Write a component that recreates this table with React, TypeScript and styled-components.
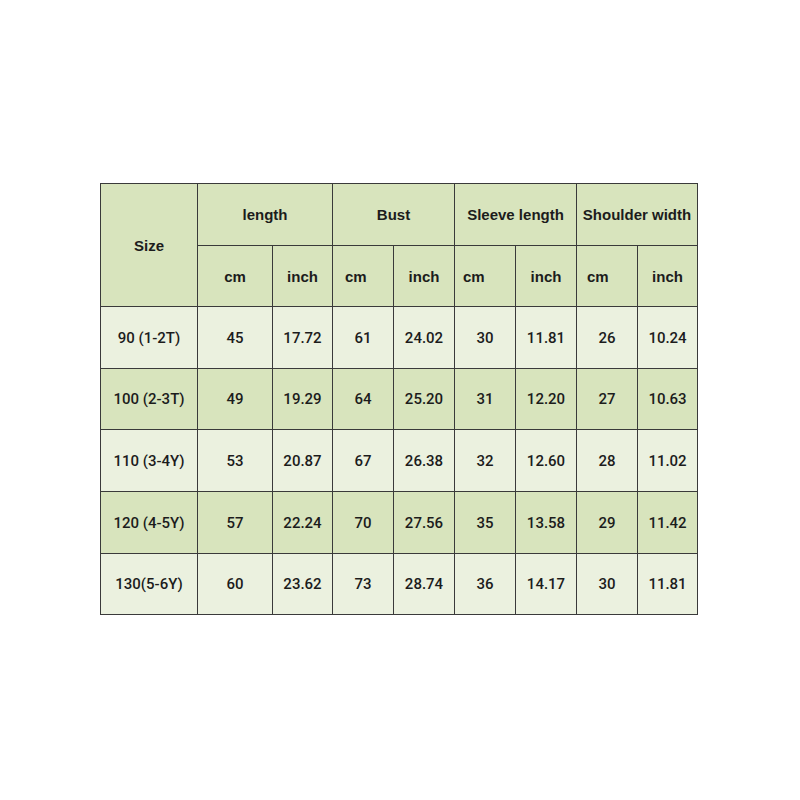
import React from "react";
import styled, { createGlobalStyle } from "styled-components";

const Global = createGlobalStyle`
  html, body { margin: 0; padding: 0; background: #ffffff; }
  body { font-family: "Liberation Sans", Arial, sans-serif; }
`;

const Page = styled.div`
  width: 800px;
  height: 800px;
  padding: 183px 0 0 100px;
  box-sizing: border-box;
`;

const Table = styled.table`
  border-collapse: collapse;
  table-layout: fixed;
  width: 598px;
  color: #1c1c1c;
`;

const HeadCell = styled.th<{ $align?: "left" | "center" | "right"; $pad?: number; $h: number }>`
  background: #d8e4bd;
  border: 1px solid #3a3a3a;
  height: ${(p) => p.$h}px;
  padding: 0 ${(p) => p.$pad ?? 0}px;
  font-size: 15px;
  font-weight: bold;
  text-align: ${(p) => p.$align ?? "center"};
  vertical-align: middle;
  white-space: nowrap;
`;

const DataCell = styled.td<{ $green: boolean; $h: number }>`
  background: ${(p) => (p.$green ? "#d8e4bd" : "#ebf1df")};
  border: 1px solid #3a3a3a;
  height: ${(p) => p.$h}px;
  padding: 0;
  font-family: Roboto, "Liberation Sans", sans-serif;
  font-size: 15px;
  font-weight: 500;
  color: #1c1c1c;
  text-align: center;
  vertical-align: middle;
  white-space: nowrap;
`;

const widths = [97, 75, 60, 61, 61, 61, 61, 61, 60];
const rowHeights = [61, 60, 61, 61, 60];

const rows: string[][] = [
  ["90 (1-2T)", "45", "17.72", "61", "24.02", "30", "11.81", "26", "10.24"],
  ["100 (2-3T)", "49", "19.29", "64", "25.20", "31", "12.20", "27", "10.63"],
  ["110 (3-4Y)", "53", "20.87", "67", "26.38", "32", "12.60", "28", "11.02"],
  ["120 (4-5Y)", "57", "22.24", "70", "27.56", "35", "13.58", "29", "11.42"],
  ["130(5-6Y)", "60", "23.62", "73", "28.74", "36", "14.17", "30", "11.81"],
];

export default function App() {
  return (
    <>
      <Global />
      <Page>
        <Table>
          <colgroup>
            {widths.map((w, i) => (
              <col key={i} style={{ width: w }} />
            ))}
          </colgroup>
          <thead>
            <tr>
              <HeadCell $h={61} rowSpan={2}>Size</HeadCell>
              <HeadCell $h={61} colSpan={2}>length</HeadCell>
              <HeadCell $h={61} colSpan={2}>Bust</HeadCell>
              <HeadCell $h={61} colSpan={2}>Sleeve length</HeadCell>
              <HeadCell $h={61} colSpan={2}>Shoulder width</HeadCell>
            </tr>
            <tr>
              <HeadCell $h={60}>cm</HeadCell>
              <HeadCell $h={60}>inch</HeadCell>
              <HeadCell $h={60} $align="left" $pad={12}>cm</HeadCell>
              <HeadCell $h={60}>inch</HeadCell>
              <HeadCell $h={60} $align="left" $pad={8}>cm</HeadCell>
              <HeadCell $h={60}>inch</HeadCell>
              <HeadCell $h={60} $align="left" $pad={10}>cm</HeadCell>
              <HeadCell $h={60}>inch</HeadCell>
            </tr>
          </thead>
          <tbody>
            {rows.map((r, i) => (
              <tr key={i}>
                {r.map((c, j) => (
                  <DataCell key={j} $green={i % 2 === 1} $h={rowHeights[i]}>
                    {c}
                  </DataCell>
                ))}
              </tr>
            ))}
          </tbody>
        </Table>
      </Page>
    </>
  );
}
